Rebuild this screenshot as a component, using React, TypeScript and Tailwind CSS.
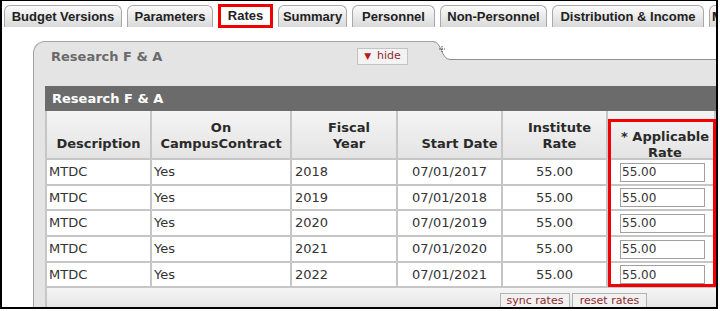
import { useState } from "react"

const tabs = [
    { label: "Budget Versions", w: "w-[118px]" },
    { label: "Parameters", w: "w-[86px]" },
    { label: "Rates", w: "w-[55px]", active: true },
    { label: "Summary", w: "w-[69px]" },
    { label: "Personnel", w: "w-[83px]" },
    { label: "Non-Personnel", w: "w-[107px]" },
    { label: "Distribution & Income", w: "w-[152px]" },
    { label: "M", w: "w-[80px]" },
]

const rows = [
    { year: "2018", start: "07/01/2017", h: "h-[26px]" },
    { year: "2019", start: "07/01/2018", h: "h-[25px]" },
    { year: "2020", start: "07/01/2019", h: "h-[26px]" },
    { year: "2021", start: "07/01/2020", h: "h-[26px]" },
    { year: "2022", start: "07/01/2021", h: "h-[25px]" },
]

const cell = "border-r-2 border-b-2 border-[#c6c6c6]"
const head = cell + " bg-gradient-to-b from-[#f4f4f4] to-[#e4e4e4] font-bold flex items-end justify-center text-center leading-[16px] text-[#2a2a2a]"

function App() {
    const [rates, setRates] = useState(rows.map(() => "55.00"))

    return (
        <div className="w-[720px] h-[311px] bg-white">
            <div className="w-[718px] h-[309px] border-x-2 border-t border-b-2 border-black bg-white overflow-hidden">
                {/* tabs */}
                <div className="flex gap-[5px] pl-[2px] pt-[4px] font-['Liberation_Sans',Arial,sans-serif] text-[13px] font-bold text-[#222]">
                    {tabs.map((t, i) => (
                        <div
                            key={t.label}
                            className={
                                t.active
                                    ? `${t.w} shrink-0 h-[24px] -mt-[1px] border-[3px] border-[#f00000] bg-white flex items-center justify-center whitespace-nowrap`
                                    : `${t.w} shrink-0 h-[22px] rounded-t-[6px] border border-b-0 border-[#a9a9a9] bg-gradient-to-b from-[#fbfbfb] to-[#d9d9d9] flex items-center whitespace-nowrap overflow-hidden ${i === tabs.length - 1 ? "justify-start pl-[2px]" : "justify-center"}`
                            }
                        >
                            {t.label}
                        </div>
                    ))}
                </div>

                {/* panel */}
                <div className="ml-[31px] mt-[13px] font-['DejaVu_Sans',Verdana,sans-serif] text-[13px] text-[#333]">
                    <div className="flex">
                        <div className="flex-1 h-[45px] rounded-tl-[12px] border-l border-t border-[#a3a3a3] bg-[#e4e4e4] flex items-start pt-[6px] pl-[17px] pr-[25px]">
                            <div className="h-[17px] flex items-center font-bold text-[#6a6a6a]">Research F &amp; A</div>
                            <button className="ml-auto w-[51px] h-[17px] border border-[#c4c4c4] bg-[#f3f3f3] flex items-center justify-center gap-[6px] text-[11px] text-[#8e2a2a]">
                                <span className="text-[9px] text-[#c01818]">▼</span>
                                <span>hide</span>
                            </button>
                        </div>
                        <div className="w-[283px] flex flex-col">
                            <div className="h-[19px] flex bg-white">
                                <svg width="17" height="19" viewBox="0 0 17 19" className="shrink-0">
                                    <path d="M0 0.5 C9 0.5 8 18.5 17 18.5 L17 19 L0 19 Z" fill="#e4e4e4" />
                                    <path d="M0 0.5 C9 0.5 8 18.5 17 18.5" fill="none" stroke="#8f8f8f" strokeWidth="1" />
                                    <path d="M6 8 H12 M9 5 V11" stroke="#555" strokeWidth="1" strokeDasharray="1.5 1" />
                                </svg>
                                <div className="flex-1 border-b border-[#8f8f8f]"></div>
                            </div>
                            <div className="flex-1 bg-[#e4e4e4]"></div>
                        </div>
                    </div>

                    <div className="border-l border-[#a3a3a3] bg-[#e4e4e4] pl-[11px]">
                        <div className="h-[25px] bg-[#6b6b6b] flex items-center px-[7px] font-bold text-white">Research F &amp; A</div>
                        <div className="relative">
                            <div className="grid grid-cols-[105px_140px_106px_105px_105px_108px] border-l-2 border-[#c6c6c6] bg-white">
                                <div className={`${head} h-[49px] pb-[6px]`}>Description</div>
                                <div className={`${head} h-[49px] pb-[6px]`}>On<br />CampusContract</div>
                                <div className={`${head} h-[49px] pb-[6px] pl-[10px]`}>Fiscal<br />Year</div>
                                <div className={`${head} h-[49px] pb-[6px] pl-[20px]`}>Start Date</div>
                                <div className={`${head} h-[49px] pb-[6px] pl-[10px]`}>Institute<br />Rate</div>
                                <div className={`${head} h-[49px] pb-0 pl-[8px]`}>
                                    <span className="translate-y-[3px]">* Applicable<br />Rate</span>
                                </div>

                                {rows.map((r, i) => (
                                    <div key={r.year} className="contents">
                                        <div className={`${cell} ${r.h} flex items-center pl-[2px]`}>MTDC</div>
                                        <div className={`${cell} ${r.h} flex items-center pl-[2px]`}>Yes</div>
                                        <div className={`${cell} ${r.h} flex items-center pl-[3px]`}>{r.year}</div>
                                        <div className={`${cell} ${r.h} flex items-center justify-center`}>{r.start}</div>
                                        <div className={`${cell} ${r.h} flex items-center justify-center`}>55.00</div>
                                        <div className={`${cell} ${r.h} flex items-center pl-[12px]`}>
                                            <input
                                                value={rates[i]}
                                                onChange={(e) => setRates(rates.map((v, j) => (j === i ? e.target.value : v)))}
                                                className="w-[85px] h-[19px] border border-[#a0a0a0] bg-white px-[1px] text-[12px] text-[#333] outline-none"
                                            />
                                        </div>
                                    </div>
                                ))}
                            </div>

                            <div className="h-[22px] bg-gradient-to-b from-[#f6f6f6] to-[#e2e2e2] border-l-2 border-[#c6c6c6] flex justify-end items-start pt-[5px] pr-[69px] gap-[2px]">
                                <button className="w-[70px] h-[16px] border border-[#b3b3b3] bg-[#f1f1f1] text-[11px] leading-[14px] text-[#8e2a2a]">sync rates</button>
                                <button className="w-[75px] h-[16px] border border-[#b3b3b3] bg-[#f1f1f1] text-[11px] leading-[14px] text-[#8e2a2a]">reset rates</button>
                            </div>

                            {/* annotation box */}
                            <div className="absolute left-[563px] top-[8px] w-[108px] h-[168px] border-[3px] border-[#f00000] pointer-events-none"></div>
                        </div>
                    </div>
                </div>
            </div>
        </div>
    )
}

export default App
